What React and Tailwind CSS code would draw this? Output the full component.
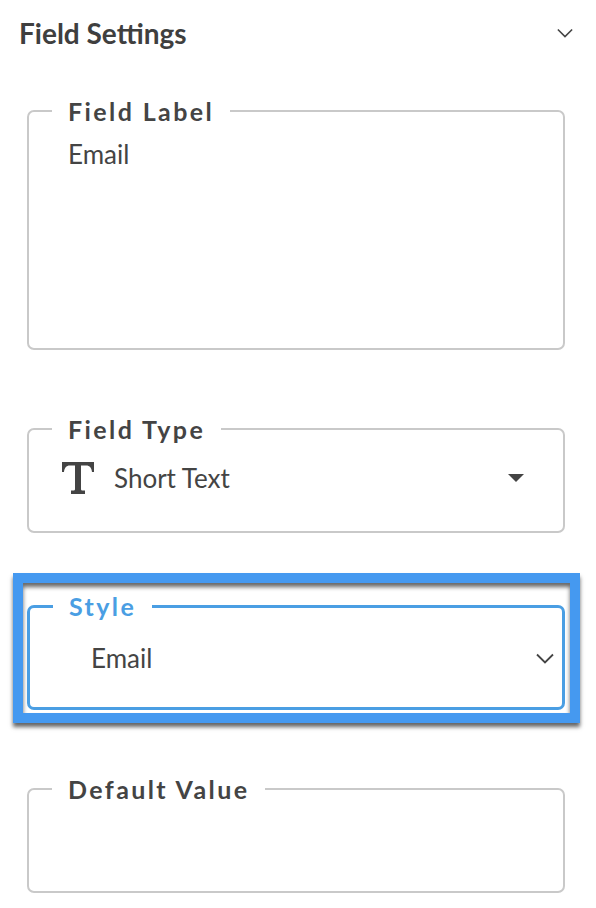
import React from 'react';

// One outlined field, the legend sits in the border line
const Field = ({ label, height, active = false, children }) => {
  return (
    <fieldset
      className={
        active
          ? 'rounded-[7px] border-[3px] border-[#4a9ee3] pl-[38px] pr-[8px]'
          : 'rounded-[7px] border-2 border-[#c9c9c9] pl-[39px] pr-[8px]'
      }
      style={{ height }}
    >
      <legend
        className={
          active
            ? 'ml-[-15px] px-[16px] text-[25px] leading-[28px] font-bold tracking-[2.4px] text-[#4a9ee3]'
            : 'ml-[-16px] px-[16px] text-[25px] leading-[28px] font-bold tracking-[2.4px] text-[#444444]'
        }
      >
        {label}
      </legend>
      {children}
    </fieldset>
  );
};

const Chevron = ({ className }) => (
  <svg viewBox="0 0 18 11" className={className} fill="none" stroke="#444444" strokeWidth="1.8">
    <path d="M1 1.5 L9 9.5 L17 1.5" />
  </svg>
);

export default function App() {
  return (
    <div className="w-[596px] h-[908px] overflow-hidden bg-white font-['Lato',sans-serif] text-[#444444]">
      <div className="flex items-center justify-between h-[66px] pl-[19px] pr-[23px]">
        <h2 className="text-[28px] font-bold text-[#3f3f3f]">Field Settings</h2>
        <Chevron className="w-[16px] h-[10px]" />
      </div>

      <div className="mt-[31px] px-[27px] pr-[31px]">
        <Field label="Field Label" height="253px">
          <div className="text-[26px] leading-[30px] mt-[14px]">Email</div>
        </Field>
      </div>

      <div className="mt-[65px] px-[27px] pr-[31px]">
        <Field label="Field Type" height="118px">
          <div className="flex items-center ml-[-6px] mt-[15px] h-[40px]">
            <svg viewBox="0 0 32 32" className="w-[32px] h-[32px] shrink-0" fill="#444444">
              <path d="M0 0 H32 V10 H30 C29.5 6 28 3.5 24 3.5 H19 V27 C19 28.5 19.5 28.5 21 28.5 H23 V32 H9 V28.5 H11 C12.5 28.5 13 28.5 13 27 V3.5 H8 C4 3.5 2.5 6 2 10 H0 Z" />
            </svg>
            <span className="ml-[20px] text-[26px] leading-[30px]">Short Text</span>
            <span className="ml-auto mr-[31px] w-0 h-0 border-x-[8px] border-x-transparent border-t-[8px] border-t-[#444444]" />
          </div>
        </Field>
      </div>

      <div className="mt-[40px] ml-[13px] w-[567px] h-[150px] border-[10px] border-[#4599f0] pt-[9px] pl-[4px] pr-[5px] shadow-[0_4px_4px_rgba(0,0,0,0.6),inset_0_4px_4px_rgba(0,0,0,0.6)]">
        <Field label="Style" height="118px" active>
          <div className="flex items-center mt-[20px] h-[36px]">
            <span className="ml-[23px] text-[26px] leading-[30px]">Email</span>
            <Chevron className="ml-auto w-[18px] h-[11px]" />
          </div>
        </Field>
      </div>

      <div className="mt-[52px] px-[27px] pr-[31px]">
        <Field label="Default Value" height="118px" />
      </div>
    </div>
  );
}
